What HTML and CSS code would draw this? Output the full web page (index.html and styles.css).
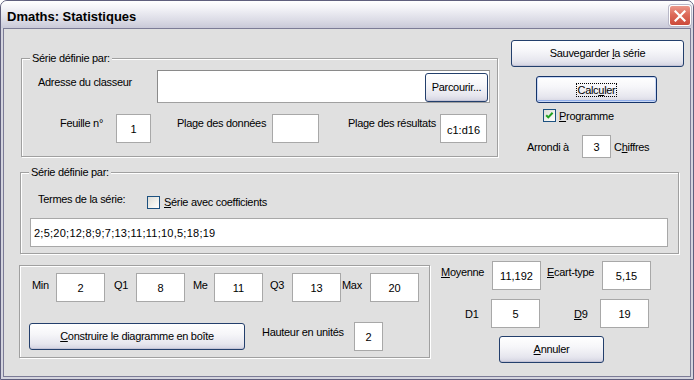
FILE: index.html
```html
<!DOCTYPE html>
<html>
<head>
<meta charset="utf-8">
<title>Dmaths: Statistiques</title>
<link rel="stylesheet" href="styles.css">
</head>
<body>
<div class="window">
  <div class="titlebar">
    <span class="title">Dmaths: Statistiques</span>
    <span class="close"><svg width="12" height="12" viewBox="0 0 12 12"><path d="M1.5 1.5 L10.5 10.5 M10.5 1.5 L1.5 10.5" stroke="#fff" stroke-width="2.2" stroke-linecap="square" fill="none"/></svg></span>
  </div>
  <div class="frame">
    <div class="client">
      <div class="top-row">
        <div class="group g1">
          <span class="legend">Série définie par:</span>
          <div class="r-addr">
            <span class="lbl l-addr">Adresse du classeur</span>
            <div class="addr"><button class="btn browse"><span>Parcourir...</span></button></div>
          </div>
          <div class="r-plage">
            <span class="lbl l-feuille">Feuille n°</span>
            <div class="field f-feuille">1</div>
            <span class="lbl l-donnees">Plage des données</span>
            <div class="field f-donnees"></div>
            <span class="lbl l-resultats">Plage des résultats</span>
            <div class="field f-resultats">c1:d16</div>
          </div>
        </div>
        <div class="side">
          <button class="btn save"><span>Sauvegarder <u>l</u>a série</span></button>
          <button class="btn calc default"><span class="focus">Calc<u>u</u>ler</span></button>
          <div class="check-row">
            <span class="cb"><svg width="11" height="11" viewBox="0 0 11 11"><path d="M2.2 5.2 L4.3 7.4 L8.6 2.8" stroke="#21a121" stroke-width="2" fill="none"/></svg></span>
            <span class="cb-label prog"><u>P</u>rogramme</span>
          </div>
          <div class="arr-row">
            <span class="lbl l-arr">Arrondi à</span>
            <div class="field f-arr">3</div>
            <span class="lbl l-chiffres">C<u>h</u>iffres</span>
          </div>
        </div>
      </div>

      <div class="group g2">
        <span class="legend">Série définie par:</span>
        <div class="r-terms">
          <span class="lbl l-terms">Termes de la série:</span>
          <div class="check-row2">
            <span class="cb"></span>
            <span class="cb-label"><u>S</u>érie avec coefficients</span>
          </div>
        </div>
        <div class="field series">2;5;20;12;8;9;7;13;11;11;10,5;18;19</div>
      </div>

      <div class="bottom-row">
        <div class="group g3">
          <div class="r-q">
            <span class="lbl l-min">Min</span>
            <div class="field fq">2</div>
            <span class="lbl l-q1">Q1</span>
            <div class="field fq">8</div>
            <span class="lbl l-me">Me</span>
            <div class="field fq">11</div>
            <span class="lbl l-q3">Q3</span>
            <div class="field fq">13</div>
            <span class="lbl l-max">Max</span>
            <div class="field fq">20</div>
          </div>
          <div class="r-build">
            <button class="btn build"><span><u>C</u>onstruire le diagramme en boîte</span></button>
            <span class="lbl l-haut">Hauteur en unités</span>
            <div class="field f-haut">2</div>
          </div>
        </div>
        <div class="stats">
          <div class="s1">
            <span class="lbl l-moy"><u>M</u>oyenne</span>
            <div class="field fs">11,192</div>
            <span class="lbl l-ecart"><u>E</u>cart-type</span>
            <div class="field fs">5,15</div>
          </div>
          <div class="s2">
            <span class="lbl l-d1">D1</span>
            <div class="field fs">5</div>
            <span class="lbl l-d9"><u>D</u>9</span>
            <div class="field fs">19</div>
          </div>
          <div class="s3">
            <button class="btn cancel"><span><u>A</u>nnuler</span></button>
          </div>
        </div>
      </div>
    </div>
  </div>
</div>
</body>
</html>
```

FILE: styles.css
```css
* { box-sizing: border-box; }
html, body { margin: 0; padding: 0; }
body {
  width: 694px;
  height: 380px;
  overflow: hidden;
  background: #ffffff;
  font-family: "Liberation Sans", Arial, sans-serif;
  font-size: 11px;
  line-height: 13px;
  letter-spacing: -0.3px;
  color: #000;
}
u { text-decoration: underline; text-underline-offset: 1px; }

.window {
  width: 694px;
  height: 380px;
  display: flex;
  flex-direction: column;
  border: 1px solid #5f5f7d;
  border-radius: 7px 7px 0 0;
  background: #d4d4de;
  overflow: hidden;
}

.titlebar {
  height: 27px;
  flex: none;
  display: flex;
  align-items: flex-start;
  padding-left: 6px;
  background: linear-gradient(#ffffff 0%, #f1f1f6 30%, #dcdce6 70%, #c9c9d8 100%);
}
.title {
  font-size: 13px;
  font-weight: bold;
  line-height: 15px;
  letter-spacing: 0;
  margin-top: 8px;
}
.close {
  margin-left: auto;
  margin-right: 2px;
  margin-top: 4px;
  width: 22px;
  height: 21px;
  border: 1px solid #ffffff;
  border-radius: 3px;
  background: linear-gradient(#ec9a8c 0%, #dd6a5a 45%, #cc4a3a 100%);
  box-shadow: 0 0 0 1px #b8b8c8;
  display: flex;
  align-items: center;
  justify-content: center;
}

.frame {
  flex: 1;
  padding: 0 2px 2px;
  display: flex;
}
.client {
  flex: 1;
  border: 1px solid #7c7c96;
  background: #e0e0e0;
}

.lbl { white-space: nowrap; flex: none; }

.group {
  position: relative;
  border: 1px solid #a0a0a0;
  box-shadow: inset 1px 1px 0 #ffffff, 1px 1px 0 #ffffff;
  flex: none;
}
.legend {
  position: absolute;
  top: -7px;
  left: 8px;
  padding: 0 2px;
  background: #e0e0e0;
  white-space: nowrap;
}

.field {
  flex: none;
  background: #ffffff;
  border: 1px solid #a8a8a8;
  display: flex;
  align-items: center;
  justify-content: center;
  padding-top: 2px;
  white-space: nowrap;
  letter-spacing: 0;
}

.btn {
  flex: none;
  font: inherit;
  letter-spacing: inherit;
  color: #000;
  margin: 0;
  padding: 0;
  border: 1px solid #233f6c;
  border-radius: 3px;
  background: linear-gradient(#ffffff 0%, #f6f6f9 40%, #e6e6ee 80%, #d3d3e1 100%);
  box-shadow: inset 0 -1px 0 #c4c4d6;
  display: flex;
  align-items: center;
  justify-content: center;
  white-space: nowrap;
}
.default {
  border-color: #14336a;
  box-shadow: inset 0 0 0 1px #c9d8f5, inset 0 -2px 0 0 #8fadea;
}
.focus {
  display: inline-block;
  line-height: 12px;
  padding: 0 1px;
  border: 1px dotted #000;
}

.cb {
  flex: none;
  width: 13px;
  height: 13px;
  border: 1px solid #1c5180;
  background: linear-gradient(135deg, #dcdcd7 0%, #f2f2ee 60%, #ffffff 100%);
  display: flex;
  align-items: center;
  justify-content: center;
}
.cb-label { white-space: nowrap; }

/* top row */
.top-row {
  display: flex;
  align-items: flex-start;
  padding: 11px 0 0 17px;
}
.g1 {
  margin-top: 18px;
  width: 477px;
  height: 99px;
  padding-top: 11px;
}
.r-addr {
  display: flex;
  align-items: flex-start;
  padding-left: 16px;
}
.l-addr { width: 119px; margin-top: 6px; }
.addr {
  width: 333px;
  height: 33px;
  background: #fff;
  border: 1px solid #a0a0a0;
  border-top-color: #8a8a8a;
  border-left-color: #8a8a8a;
  display: flex;
  justify-content: flex-end;
  align-items: flex-end;
  padding-right: 1px;
}
.browse { width: 63px; height: 29px; }

.r-plage {
  display: flex;
  align-items: flex-start;
  margin-top: 11px;
  padding-left: 38px;
}
.r-plage .lbl { margin-top: 3px; }
.l-feuille { width: 56px; }
.f-feuille { width: 35px; height: 29px; }
.l-donnees { margin-left: 26px; width: 95px; }
.f-donnees { width: 47px; height: 29px; }
.l-resultats { margin-left: 29px; width: 92px; }
.f-resultats { width: 47px; height: 29px; padding-top: 4px; }

.side {
  margin-left: 13px;
  width: 173px;
  display: flex;
  flex-direction: column;
  align-items: flex-start;
}
.save { width: 173px; height: 27px; }
.calc { width: 121px; height: 27px; margin: 9px 0 0 25px; }
.check-row {
  display: flex;
  align-items: flex-start;
  margin: 6px 0 0 32px;
  height: 13px;
}
.prog { margin: 1px 0 0 3px; }
.arr-row {
  display: flex;
  align-items: flex-start;
  margin: 13px 0 0 16px;
}
.l-arr { width: 55px; margin-top: 6px; }
.f-arr { width: 29px; height: 23px; padding-top: 1px; }
.l-chiffres { margin: 6px 0 0 3px; }

/* group 2 */
.g2 {
  margin: 14px 0 0 16px;
  width: 659px;
  height: 82px;
}
.r-terms {
  display: flex;
  align-items: flex-start;
  margin-top: 20px;
  padding-left: 17px;
  height: 16px;
}
.l-terms { width: 109px; }
.check-row2 {
  display: flex;
  align-items: center;
  margin-top: 3px;
}
.check-row2 .cb-label { margin-left: 4px; }
.series {
  margin: 9px 0 0 9px;
  width: 638px;
  height: 29px;
  justify-content: flex-start;
  padding-left: 3px;
  letter-spacing: 0.25px;
}

/* bottom row */
.bottom-row {
  display: flex;
  align-items: flex-start;
  margin-top: 7px;
  padding-left: 15px;
}
.g3 {
  margin-top: 4px;
  width: 411px;
  height: 93px;
  padding-top: 7px;
}
.r-q {
  display: flex;
  align-items: flex-start;
  padding-left: 12px;
}
.r-q .lbl { margin-top: 6px; }
.fq { width: 49px; height: 29px; }
.l-min { width: 24px; }
.l-q1 { margin-left: 9px; width: 22px; }
.l-me { margin-left: 8px; width: 21px; }
.l-q3 { margin-left: 7px; width: 22px; }
.l-max { margin-left: 1px; width: 28px; }

.r-build {
  display: flex;
  align-items: flex-start;
  margin-top: 20px;
  padding-left: 9px;
}
.build { width: 216px; height: 27px; margin-top: 1px; }
.l-haut { margin: 4px 0 0 17px; width: 92px; }
.f-haut { width: 29px; height: 29px; }

.stats { margin-left: 11px; }
.s1, .s2, .s3 { display: flex; align-items: flex-start; }
.fs { width: 49px; height: 29px; }
.s1 .lbl { margin-top: 5px; }
.l-moy { width: 51px; }
.l-ecart { margin-left: 6px; width: 55px; }
.s2 { margin-top: 9px; }
.s2 .lbl { margin-top: 9px; }
.l-d1 { margin-left: 24px; width: 26px; }
.l-d9 { margin-left: 34px; width: 26px; }
.s3 { margin-top: 8px; }
.cancel { margin-left: 58px; width: 105px; height: 27px; }
```
